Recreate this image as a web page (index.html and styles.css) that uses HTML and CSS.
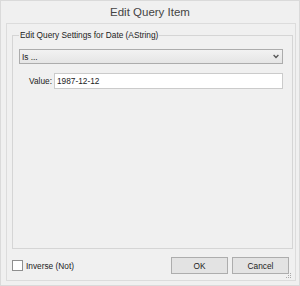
FILE: index.html
```html
<!DOCTYPE html>
<html lang="en">
  <head>
    <meta charset="UTF-8" />
    <title>Edit Query Item</title>
    <link rel="stylesheet" href="styles.css">
  </head>
  <body>
    <div class="window">
      <div class="titlebar">Edit Query Item</div>

      <div class="client">
        <fieldset class="group">
          <legend>Edit Query Settings for Date (AString)</legend>

          <!-- combo do operador -->
          <div class="combo">
            <span>Is ...</span>
            <svg class="chevron" viewBox="0 0 6 5" aria-hidden="true">
              <path d="M0.6 1 L3 3.5 L5.4 1" />
            </svg>
          </div>

          <div class="field-row">
            <label class="field-label">Value:</label>
            <div class="textbox">1987-12-12</div>
          </div>
        </fieldset>

        <div class="footer">
          <label class="check">
            <span class="check-box"></span>
            Inverse (Not)
          </label>
          <div class="buttons">
            <button class="btn">OK</button>
            <button class="btn">Cancel</button>
          </div>
        </div>
      </div>

      <!-- grip de redimensionar -->
      <svg class="grip" viewBox="0 0 6 6" aria-hidden="true">
        <rect x="4" y="0" width="1" height="1" />
        <rect x="2" y="2" width="1" height="1" />
        <rect x="4" y="2" width="1" height="1" />
        <rect x="0" y="4" width="1" height="1" />
        <rect x="2" y="4" width="1" height="1" />
        <rect x="4" y="4" width="1" height="1" />
      </svg>
    </div>
  </body>
</html>
```

FILE: styles.css
```css
body {
  margin: 0;
  padding: 0;
  background-color: #f0f0f0;
  font-family: "Liberation Sans", Arial, sans-serif;
  font-size: 8.3px;
  color: #222;
}
.window {
  position: relative;
  width: 300px;
  height: 286px;
  box-sizing: border-box;
  border: 1px solid #dadada;
  display: flex;
  flex-direction: column;
}
.titlebar {
  height: 22px;
  line-height: 22px;
  text-align: center;
  font-size: 11.5px;
  color: #444;
}
.client {
  flex: 1;
  margin: 0 3px 4px 5px;
  border: 1px solid #dcdcdc;
  padding-top: 6px;
  display: flex;
  flex-direction: column;
}
/* Group box */
.group {
  flex: 1;
  margin: 0 2px 0 5px;
  padding: 8px 9px 0 6px;
  border: 1px solid #d5d5d5;
  min-width: 0;
}
.group legend {
  padding: 0 1px;
  line-height: 11px;
}
.combo {
  height: 15px;
  box-sizing: border-box;
  border: 1px solid #acacac;
  background: linear-gradient(#f2f2f2, #e5e5e5);
  display: flex;
  align-items: center;
  justify-content: space-between;
  padding: 0 3px 0 2px;
}
.chevron {
  width: 6px;
  height: 5px;
  fill: none;
  stroke: #555;
  stroke-width: 1.3;
}
.field-row {
  margin-top: 9px;
  display: flex;
  align-items: center;
  gap: 2px;
}
.field-label {
  width: 33px;
  text-align: right;
}
.textbox {
  flex: 1;
  height: 16px;
  box-sizing: border-box;
  border: 1px solid #cbcbcb;
  background-color: #fff;
  padding-left: 2px;
  display: flex;
  align-items: center;
}
/* Rodapé */
.footer {
  margin-top: 8px;
  padding: 0 6px 6px 5px;
  display: flex;
  align-items: center;
  justify-content: space-between;
}
.check {
  display: flex;
  align-items: center;
  gap: 3px;
}
.check-box {
  width: 11px;
  height: 11px;
  box-sizing: border-box;
  border: 1px solid #8f8f8f;
  background-color: #fff;
}
.buttons {
  display: flex;
  gap: 4px;
}
.btn {
  width: 57px;
  height: 17px;
  box-sizing: border-box;
  border: 1px solid #adadad;
  background-color: #e3e3e3;
  font-family: inherit;
  font-size: 8.3px;
  color: #222;
  padding: 0;
}
.grip {
  position: absolute;
  right: 7px;
  bottom: 6px;
  width: 6px;
  height: 6px;
  fill: #a8a8a8;
}
```
